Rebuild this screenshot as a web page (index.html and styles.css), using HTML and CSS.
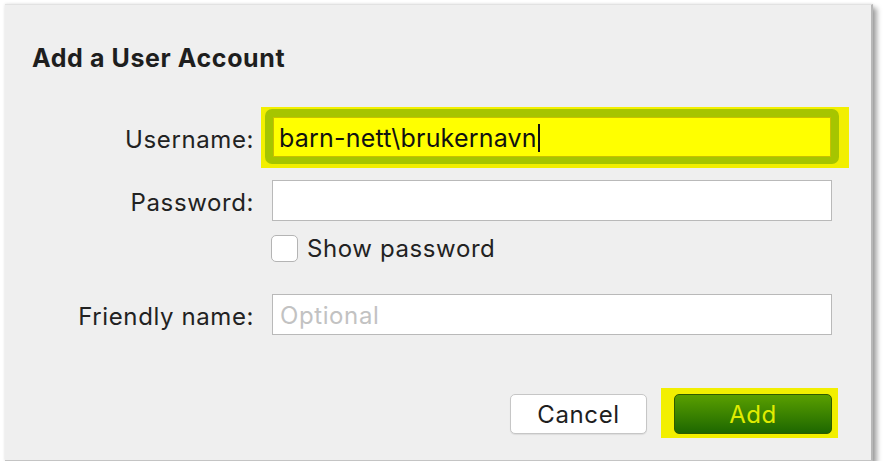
FILE: index.html
```html
<!DOCTYPE html>
<html>
<head>
    <title>Add a User Account</title>
    <link rel="stylesheet" href="styles.css">
</head>
<body>
    <div class="dialog">
        <h1 class="dialog-title">Add a User Account</h1>

        <div class="form-row row-username">
            <label class="form-label" for="username">Username:</label>
            <div class="mark-box">
                <div class="focus-ring">
                    <div class="text-input input-focused" id="username">barn-nett\brukernavn<span class="caret"></span></div>
                </div>
            </div>
        </div>

        <div class="form-row row-password">
            <label class="form-label" for="password">Password:</label>
            <input class="text-input" type="password" id="password">
        </div>

        <div class="form-row row-show">
            <span class="form-label"></span>
            <label class="check-label">
                <span class="check-box"></span>
                Show password
            </label>
        </div>

        <div class="form-row row-friendly">
            <label class="form-label" for="friendly">Friendly name:</label>
            <input class="text-input" type="text" id="friendly" placeholder="Optional">
        </div>

        <div class="button-row">
            <button class="btn btn-cancel">Cancel</button>
            <div class="mark-button">
                <button class="btn btn-add">Add</button>
            </div>
        </div>
    </div>
</body>
</html>
```

FILE: styles.css
```css
body {
    margin: 0;
    background-color: #fff;
    font-family: 'Inter', 'Liberation Sans', sans-serif;
    color: #222;
}

.dialog {
    margin: 4px 0 0 5px;
    width: 868px;
    height: 457px;
    box-sizing: border-box;
    background-color: #efefef;
    border-top: 1px solid #e2e2e2;
    border-right: 2px solid #b8b8b8;
    border-bottom: 1px solid #c4c4c4;
    box-shadow: 0 0 3px rgba(0, 0, 0, 0.12), 4px 4px 5px rgba(0, 0, 0, 0.35);
    padding-top: 38px;
    display: flex;
    flex-direction: column;
}

.dialog-title {
    margin: 0 0 0 27px;
    font-size: 25px;
    font-weight: 700;
    letter-spacing: 0.6px;
    line-height: 30px;
    color: #1e1e1e;
}

.form-row {
    display: flex;
    align-items: center;
    gap: 18px;
}

.form-label {
    width: 249px;
    flex-shrink: 0;
    text-align: right;
    font-size: 24px;
    letter-spacing: 0.6px;
    padding-top: 3px;
}

.row-username {
    margin-top: 34px;
    height: 61px;
}

.mark-box {
    margin-left: -11px;
    width: 588px;
    height: 61px;
    box-sizing: border-box;
    padding: 2px 10px 4px 4px;
    background-color: #f2ef00;
}

.focus-ring {
    height: 100%;
    box-sizing: border-box;
    border: 8px solid #a6c500;
    border-bottom-width: 7px;
    border-radius: 7px;
}

.text-input {
    width: 560px;
    height: 41px;
    box-sizing: border-box;
    margin: 0;
    border: 1px solid #b9b9b9;
    background-color: #fff;
    font-family: inherit;
    font-size: 24px;
    letter-spacing: 0.6px;
    padding: 2px 7px 0;
    outline: none;
}

.text-input::placeholder {
    color: #c2c2c2;
}

.input-focused {
    width: 100%;
    height: 100%;
    background-color: #ffff00;
    border-color: #c9c000;
    color: #111;
    font-size: 25px;
    letter-spacing: 0.2px;
    padding: 2px 5px 0;
    display: flex;
    align-items: center;
}

.caret {
    display: inline-block;
    width: 2px;
    height: 28px;
    margin-left: 1px;
    background-color: #111;
}

.row-password {
    margin-top: 12px;
}

.row-show {
    margin-top: 14px;
    height: 27px;
}

.row-show .form-label {
    padding-top: 0;
}

.check-label {
    display: flex;
    align-items: center;
    gap: 9px;
    font-size: 24px;
    letter-spacing: 0.6px;
    margin-left: -1px;
}

.check-box {
    width: 27px;
    height: 27px;
    box-sizing: border-box;
    border: 1px solid #b4b4b4;
    border-radius: 5px;
    background-color: #fff;
}

.row-friendly {
    margin-top: 32px;
}

.button-row {
    margin-top: 53px;
    display: flex;
    justify-content: flex-end;
    align-items: flex-start;
    gap: 14px;
    padding-right: 33px;
}

.btn {
    font-family: inherit;
    font-size: 24px;
    letter-spacing: 0.6px;
    height: 40px;
    border-radius: 5px;
    margin: 0;
    padding: 0;
    cursor: pointer;
}

.btn-cancel {
    margin-top: 6px;
    width: 137px;
    background-color: #fff;
    border: 1px solid #c6c6c6;
    box-shadow: 0 1px 1px rgba(0, 0, 0, 0.08);
    color: #1e1e1e;
}

.mark-button {
    background-color: #f2ef00;
    padding: 6px 6px 4px 13px;
}

.btn-add {
    width: 158px;
    display: block;
    background: linear-gradient(#5a9f00, #1d6700);
    border: 1px solid #2f5a00;
    color: #e0ec00;
}
```
